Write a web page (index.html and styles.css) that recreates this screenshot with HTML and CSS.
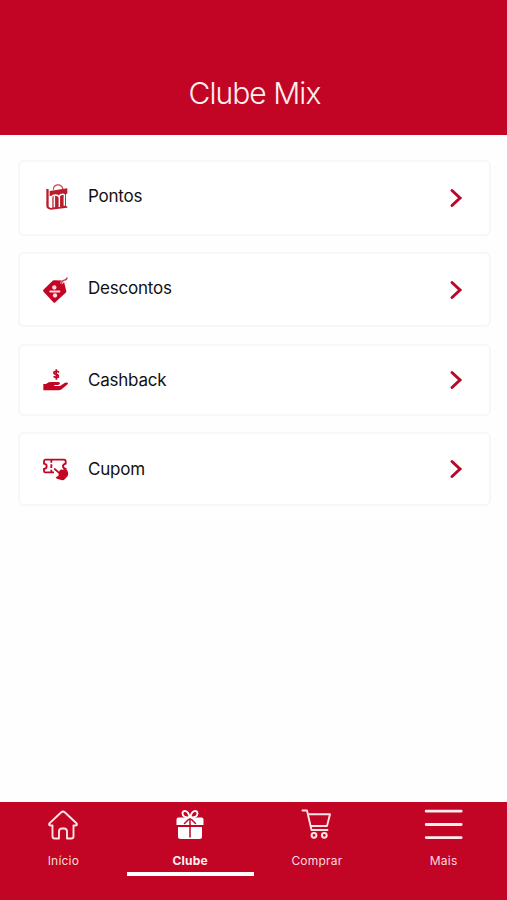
FILE: index.html
```html
<!DOCTYPE html>
<html lang="pt-BR">
<head>
<meta charset="utf-8">
<title>Clube Mix</title>
<link rel="stylesheet" href="styles.css">
</head>
<body>
<div class="app">
  <header class="header"><h1 class="title">Clube Mix</h1></header>
  <main class="list">
    <a class="card card-points">
      <svg class="card-icon" viewBox="18 24 90 90"><path d="M55 44C56 27 78 23 84 42" fill="none" stroke="#c94450" stroke-width="3.5"/><path fill="#b91d2b" d="M34 41l7 2v52l6 4v5l-8-3q-5-2-5-8zM44 48l53-8v16l-4 1v37h4v4l-50 6v-5l5-1V62l-8 1z"/><path d="M58 63v34M73 64v32M88 64v28M51 64q3-4 8-4 10-1 13 6 3-8 10-8 7-1 7 6" fill="none" stroke="#fff" stroke-width="4.500"/></svg>
      <span class="label">Pontos</span>
      <svg class="chevron" viewBox="0 0 14 20"><path d="M3 2.500l8 7.500-8 7.500"/></svg>
    </a>
    <a class="card card-discounts">
      <svg class="card-icon" viewBox="18 22.5 90 90"><path fill="#c20524" d="M57 38l25 1q4 0 5 4l7 28q0 3-2 5L61 104q-3 3-6 0L25 72q-2-3 1-6l27-26z"/><path d="M80 49q0-8 9-10 7-1 7-7" fill="none" stroke="#fff" stroke-width="8"/><path d="M79 49q1-10 9-11 8-1 8-7" fill="none" stroke="#c93850" stroke-width="4" stroke-linecap="round"/><g fill="#ffd9dd"><circle cx="58" cy="60" r="6.500"/><circle cx="60" cy="84" r="6.500"/><rect x="43" y="69" width="33" height="6" rx="2"/></g></svg>
      <span class="label">Descontos</span>
      <svg class="chevron" viewBox="0 0 14 20"><path d="M3 2.500l8 7.500-8 7.500"/></svg>
    </a>
    <a class="card card-cashback">
      <svg class="card-icon" viewBox="18 21 90 90"><path fill="#c20524" d="M25 78h8l8-5q3-1 7-1h22q5 1 5 4t-6 5H58v3h17l15-10q6-2 9 1 0 3-3 5L80 94q-4 3-9 3H25z"/><path d="M72 43q-4-4-9-3c-9 1-8 8 0 9 10 2 9 10 1 10q-5 0-8-4M64 34v31" fill="none" stroke="#c20524" stroke-width="5"/></svg>
      <span class="label">Cashback</span>
      <svg class="chevron" viewBox="0 0 14 20"><path d="M3 2.500l8 7.500-8 7.500"/></svg>
    </a>
    <a class="card card-coupon">
      <svg class="card-icon" viewBox="18 24 90 90"><path d="M57 79H31q-4 0-4-4v-6q8-1 8-8t-8-8v-7q0-5 4-5h56q5 0 5 5v7q-8 2-8 8 0 6 8 8v2M49 42v8M49 55v11M49 71v8" fill="none" stroke="#c20524" stroke-width="5.500"/><path d="M59 69l15 13" stroke="#c20524" stroke-width="5" stroke-linecap="round"/><path fill="#c20524" d="M72 78l3-6q3-3 7-1l8-2q7 2 9 9 2 7-1 12l-8 9q-5 6-11 3l-11-3q-6-2-5-6l7-3z"/></svg>
      <span class="label">Cupom</span>
      <svg class="chevron" viewBox="0 0 14 20"><path d="M3 2.500l8 7.500-8 7.500"/></svg>
    </a>
  </main>
  <nav class="tabs">
    <a class="tab">
      <svg class="tab-icon" viewBox="0 0 40 32"><path d="M9.500 16v11.200q0 2.300 2.300 2.300h4.200v-7q0-3 3-3h2q3 0 3 3v7h4.200q2.300 0 2.300-2.300V16M10 16.500H7.500q-2.500-.5-.7-2.500L18.300 3.200q1.700-1.500 3.400 0L33.200 14q1.800 2-.7 2.500H30" fill="none" stroke="#ffe3e5" stroke-width="1.900" stroke-linejoin="round"/></svg>
      <span class="tab-label">Início</span>
    </a>
    <a class="tab active">
      <svg class="tab-icon" viewBox="0 0 40 32"><path fill="#fff" d="M8.500 8.500h23q2 0 2 2V16h-27v-5.500q0-2 2-2zM8 18h24v9.500q0 2.500-2.500 2.500h-19Q8 30 8 27.500z"/><path d="M20 8v20M18.500 10.500l-4 4M21.500 10.500l4 4" stroke="#c20524" stroke-width="1.500" stroke-linecap="round"/><path d="M19.500 8C16 9 12.500 7.500 12.500 4.500c0-4 6-3.500 7 3.500zM20.500 8c3.500 1 7-.5 7-3.500 0-4-6-3.500-7 3.500z" fill="#c20524" stroke="#fff" stroke-width="1.900"/></svg>
      <span class="tab-label">Clube</span>
    </a>
    <a class="tab">
      <svg class="tab-icon" viewBox="0 0 40 32"><path d="M5.500 1.500H10l4.500 19.500h16M11 5.300h22l-3 11.700H14" fill="none" stroke="#ffe3e5" stroke-width="1.900" stroke-linecap="round" stroke-linejoin="round"/><g fill="none" stroke="#ffe3e5" stroke-width="2"><circle cx="17" cy="26.300" r="2.400"/><circle cx="27.300" cy="26.300" r="2.400"/></g></svg>
      <span class="tab-label">Comprar</span>
    </a>
    <a class="tab">
      <svg class="tab-icon" viewBox="0 0 40 32"><path d="M2.200 2.200h35M2.200 15.500h35M2.200 28.600h35" stroke="#ffeced" stroke-width="2.800" stroke-linecap="round"/></svg>
      <span class="tab-label">Mais</span>
    </a>
  </nav>
</div>
</body>
</html>
```

FILE: styles.css
```css
* { box-sizing: border-box; }
body { margin: 0; font-family: Inter, sans-serif; background: #fefefe; }
.app { height: 900px; display: flex; flex-direction: column; }
.header { height: 135px; flex: none; background: #c20524; padding-top: 74px; text-align: center; }
.title { margin: 0 0 0 2px; font-size: 30px; line-height: 38px; font-weight: 350; letter-spacing: -0.95px; color: #fff0f1; }
.list { flex: 1; padding: 25px 16px 0 18px; display: flex; flex-direction: column; gap: 16px; }
.card { display: flex; align-items: center; border: 2px solid #f7f7f7; border-radius: 6px; background: #fff; padding: 0 26px 0 21px; }
.card-points { height: 76px; }
.card-discounts { height: 75px; margin-bottom: 1px; }
.card-cashback { height: 72px; }
.card-coupon { height: 74px; }
.card-icon { width: 30px; height: 30px; flex: none; }
.label { flex: 1; margin-left: 17px; font-size: 17px; line-height: 22px; letter-spacing: -0.22px; color: #111; }
.card-points .label { padding-bottom: 4px; }
.card-discounts .label { padding-bottom: 3px; }
.card-coupon .label { padding-bottom: 1px; }
.chevron { width: 14px; height: 20px; fill: none; stroke: #b9092b; stroke-width: 3; stroke-linecap: round; stroke-linejoin: miter; }
.tabs { height: 98px; flex: none; display: grid; grid-template-columns: repeat(4, 1fr); align-items: start; background: #c20524; }
.tab { height: 74px; padding-top: 7px; display: flex; flex-direction: column; align-items: center; border-bottom: 4px solid transparent; }
.tab-icon { width: 40px; height: 32px; }
.tab-label { margin-top: 12px; font-size: 12px; line-height: 16px; letter-spacing: 0.2px; color: #ffd9dd; }
.active { border-bottom-color: #fff; }
.active .tab-label { font-weight: 700; color: #fff0f1; }
```
